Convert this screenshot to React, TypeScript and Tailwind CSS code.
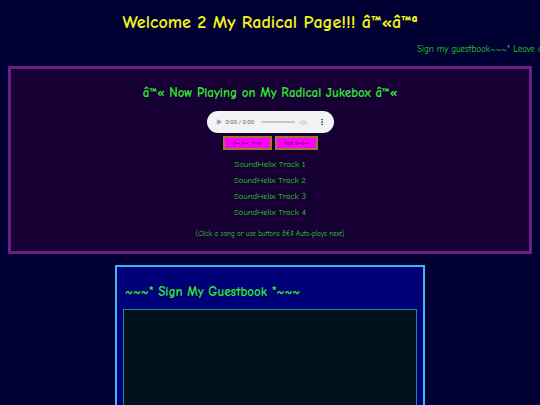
import { Play, Volume2, MoreVertical } from 'lucide-react';

const TRACKS = ['SoundHelix Track 1', 'SoundHelix Track 2', 'SoundHelix Track 3', 'SoundHelix Track 4'];

const COMIC = { fontFamily: '"Comic Sans MS", "Comic Neue", Lato, sans-serif' };

function FakeAudio() {
  return (
    <div className="mx-auto flex h-[22px] w-[127px] items-center rounded-full bg-[#f1f3f4] pl-[9px] pr-[8px] text-[#5f6368]">
      <Play className="h-[6px] w-[6px] fill-[#9aa0a6] stroke-[#9aa0a6]" />
      <span className="ml-[4px] text-[6px] leading-none" style={{ fontFamily: 'Roboto, sans-serif' }}>
        0:00 / 0:00
      </span>
      <div className="ml-[7px] h-[2px] w-[34px] rounded bg-[#c4c7ca]" />
      <Volume2 className="ml-[5px] h-[7px] w-[7px] text-[#b0b4b8]" />
      <MoreVertical className="ml-auto h-[8px] w-[8px] text-[#3c4043]" strokeWidth={3} />
    </div>
  );
}

export default function App() {
  return (
    <div className="min-h-screen overflow-hidden bg-[#000033] pb-4" style={COMIC}>
      <h1 className="pt-[11px] text-center text-[18px] leading-[24px] font-bold text-[#f2f21e]">
        Welcome 2 My Radical Page!!! â™«â™ª
      </h1>

      <div className="mt-[8px] h-[12px] overflow-hidden whitespace-nowrap pl-[417px] text-[9px] leading-[12px] text-[#27d327]">
        Sign my guestbook~~~* Leave a comment!!! ~~~*
      </div>

      <section className="mx-[8px] mt-[11px] border-[3px] border-[#6e1c88] bg-[#170033] pt-[15px] pb-[12px] text-center">
        <h2 className="text-[13px] leading-[18px] font-bold text-[#2ee82e]">
          â™« Now Playing on My Radical Jukebox â™«
        </h2>

        <div className="mt-[9px]">
          <FakeAudio />
        </div>

        <div className="mt-[3px] flex justify-center gap-[3px]">
          <button className="h-[14px] w-[49px] border-2 border-[#a07a2a] bg-[#ff00ff] text-[5px] leading-none text-[#220022]">
            â—„â—„ Prev
          </button>
          <button className="h-[14px] w-[43px] border-2 border-[#a07a2a] bg-[#ff00ff] text-[5px] leading-none text-[#220022]">
            Next â–ºâ–º
          </button>
        </div>

        <ul className="mt-[6px]">
          {TRACKS.map((track) => (
            <li key={track} className="text-[8.6px] leading-[16px] text-[#2ed22e]">
              {track}
            </li>
          ))}
        </ul>

        <p className="mt-[9px] text-[7px] leading-[10px] text-[#2ed22e]">
          (Click a song or use buttons â€¢ Auto-plays next)
        </p>
      </section>

      <section className="mx-auto mt-[11px] w-[310px] border-2 border-[#3cb8ec] bg-[#000078] px-[6px] pt-[16px]">
        <h3 className="pl-[2px] text-[13px] leading-[18px] font-bold text-[#2ee82e]">~~~* Sign My Guestbook *~~~</h3>
        <div className="mt-[8px] h-[140px] border border-[#1e8c8c] bg-[#00111e]" />
      </section>
    </div>
  );
}
